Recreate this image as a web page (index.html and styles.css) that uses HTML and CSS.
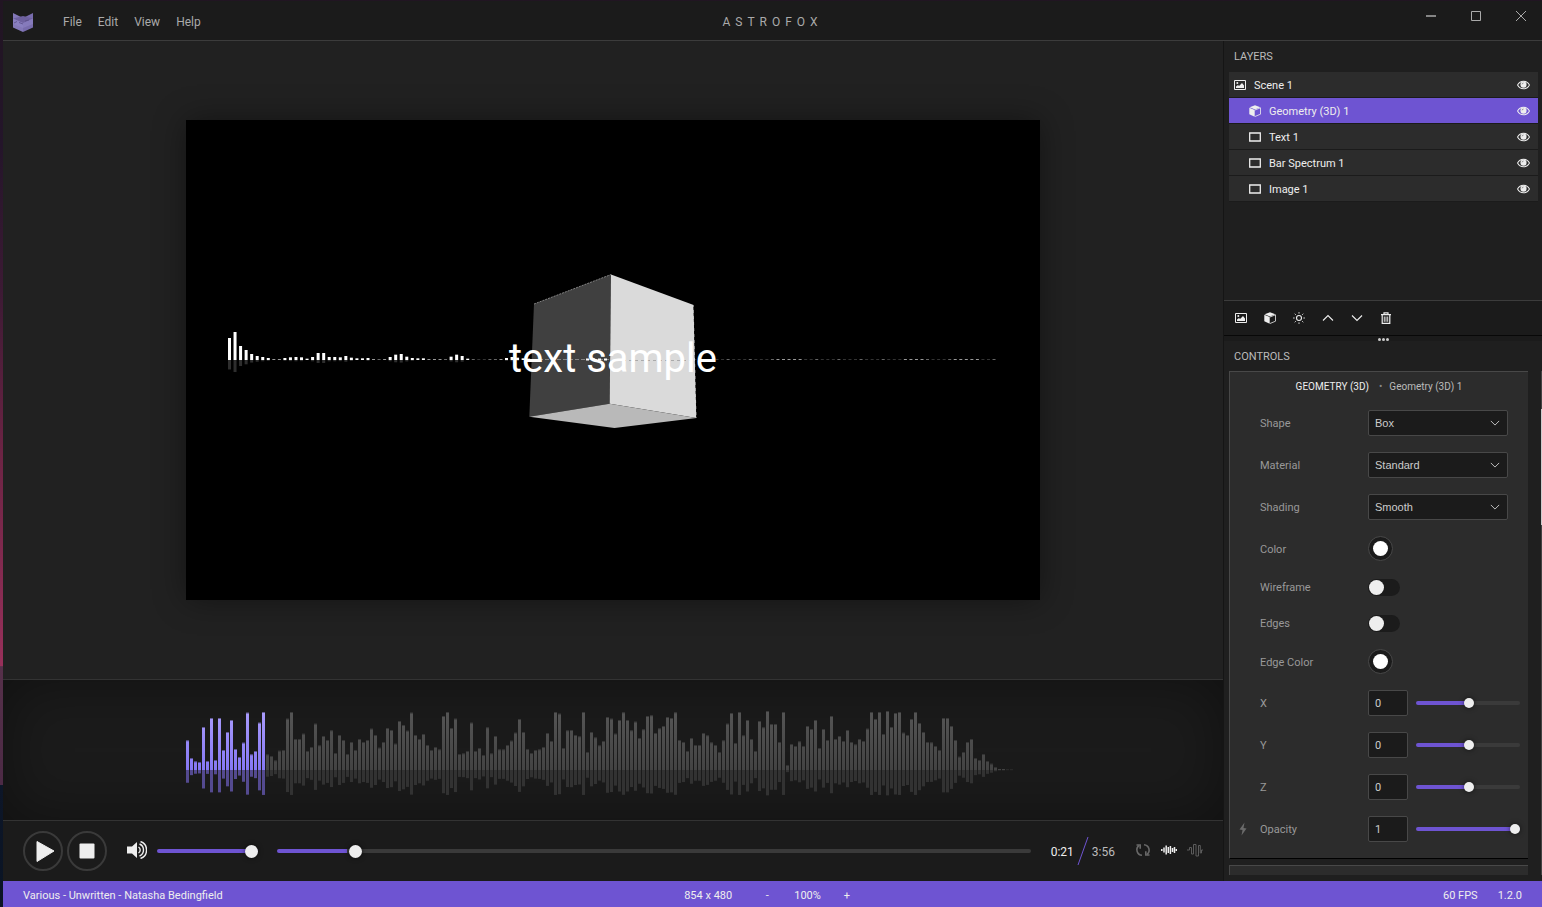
FILE: index.html
```html
<!DOCTYPE html>
<html lang="en">
<head>
<meta charset="utf-8">
<title>Astrofox</title>
<link rel="stylesheet" href="styles.css">
</head>
<body>
<svg class="sprite" aria-hidden="true">
  <symbol id="i-image" viewBox="0 0 12 10"><path d="M.5.5h11v9H.5z" fill="none" stroke="currentColor"/><path d="M2 8V6.500l2-1.500 1 1 3-3 2 2.500V8z" fill="currentColor"/><circle cx="3.300" cy="3" r="1" fill="currentColor"/></symbol>
  <symbol id="i-cube" viewBox="0 0 12 12"><path d="M.3 2.800 5.700 5v6.800L.3 9.300z" fill="currentColor"/><path d="M.6 2.200 6 .2l5.400 2L6 4.400z" fill="currentColor"/><path d="M6 5 11.500 2.800v6.400L6 11.500" fill="none" stroke="currentColor" stroke-width=".8"/></symbol>
  <symbol id="i-rect" viewBox="0 0 12 10"><path d="M.7 1h10.600v8H.7z" fill="none" stroke="currentColor" stroke-width="1.300"/></symbol>
  <symbol id="i-eye" viewBox="0 0 14 10"><path d="M.6 5C2 2.300 4.300.9 7 .9S12 2.300 13.400 5C12 7.700 9.700 9.100 7 9.100S2 7.700.6 5z" fill="none" stroke="currentColor" stroke-width="1.100"/><circle cx="7" cy="4.600" r="3.300" fill="currentColor"/><path d="M5.500 4.300A1.500 1.500 0 0 1 7 2.900" fill="none" stroke="#2c2c2c" stroke-width=".5"/></symbol>
  <symbol id="i-sun" viewBox="0 0 12 12"><circle cx="6" cy="6" r="2.500" fill="none" stroke="currentColor" stroke-width="1.100"/><path d="M6 0v1.700M6 10.300V12M0 6h1.700M10.300 6H12M1.700 1.700l1.200 1.200M9.100 9.100l1.200 1.200M1.700 10.300l1.200-1.200M9.100 2.900l1.200-1.200" stroke="currentColor" stroke-width=".8"/></symbol>
  <symbol id="i-up" viewBox="0 0 12 12"><path d="M1 8.500 6 3.500l5 5" fill="none" stroke="currentColor" stroke-width="1.100"/></symbol>
  <symbol id="i-down" viewBox="0 0 12 12"><path d="M1 3.500l5 5 5-5" fill="none" stroke="currentColor" stroke-width="1.100"/></symbol>
  <symbol id="i-trash" viewBox="0 0 12 12"><path d="M1 2.700h10M4 2.500V.8h4v1.700M2.200 3v8.300h7.600V3" fill="none" stroke="currentColor" stroke-width="1.200"/><path d="M4.300 4.500v5.300M6 4.500v5.300M7.700 4.500v5.300" stroke="currentColor" stroke-width=".9"/></symbol>
</svg>

<div class="app">
  <header class="titlebar">
    <div class="titlebar-left">
      <svg class="logo" viewBox="0 0 20 20" aria-label="Astrofox logo"><path d="M0 1l10 5v14L0 15.500z" fill="#8378b8"/><path d="M20 1l-10 5v14l10-4.500z" fill="#786cad"/><path d="M0 6.500 10 4l10 2.500L10 11z" fill="#6e619f"/><path d="M0 6.500 10 11l10-4.500V12l-10 4L0 12z" fill="#8e83c4" opacity=".6"/><path d="M1 11l3-1.500M6 10.500l4 1.500M12 9l4-1" stroke="#584c85" stroke-width=".8"/></svg>
      <nav class="menu">
        <button type="button">File</button><button type="button">Edit</button><button type="button">View</button><button type="button">Help</button>
      </nav>
    </div>
    <h1 class="app-name">ASTROFOX</h1>
    <div class="window-buttons">
      <button type="button" aria-label="Minimize"><svg viewBox="0 0 10 10"><path d="M0 5h10" stroke="currentColor" stroke-width="1.500"/></svg></button>
      <button type="button" aria-label="Maximize"><svg viewBox="0 0 10 10"><path d="M.5.5h9v9h-9z" fill="none" stroke="currentColor"/></svg></button>
      <button type="button" aria-label="Close"><svg viewBox="0 0 10 10"><path d="M0 0l10 10M10 0 0 10" stroke="currentColor"/></svg></button>
    </div>
  </header>

  <div class="workspace">
    <main class="main">
      <section class="stage">
        <svg class="scene" viewBox="0 0 854 480" role="img" aria-label="Scene preview">
          <g id="spectrum-back"></g>
          <path d="M348 184 425 154.500 423.700 283.700 343.300 296.700z" fill="#404040"/>
          <path d="M425 154.500 507.600 185 510.500 298 423.700 283.700z" fill="#dadada"/>
          <path d="M343.300 296.700 423.700 283.700 510.500 298 428.500 308z" fill="#b9b9b9"/>
          <path d="M348 184 425 154.500" stroke="#aaa" stroke-width=".7" stroke-dasharray="2 1"/>
          <path d="M508 187 510.800 297" stroke="#000" stroke-width="1" stroke-dasharray="3 3"/>
          <path d="M347 239.500h77" stroke="#ccc" stroke-dasharray="4 2" opacity=".5"/>
          <path d="M425 240.500h84" stroke="#aaa" stroke-dasharray="3 3"/>
          <path d="M400 239.500h23" stroke="#fff" stroke-width="2" stroke-dasharray="3 3"/>
          <text class="scene-text" x="427" y="252" text-anchor="middle">text sample</text>
        </svg>
      </section>
      <section class="waveform">
        <svg class="wave" viewBox="0 0 854 140" role="img" aria-label="Waveform">
          <defs>
            <linearGradient id="played" gradientUnits="userSpaceOnUse" x1="0" y1="30" x2="0" y2="90"><stop offset="0" stop-color="#aa9cfc"/><stop offset="1" stop-color="#8577f4"/></linearGradient>
            <linearGradient id="unplayed" gradientUnits="userSpaceOnUse" x1="0" y1="30" x2="0" y2="90"><stop offset="0" stop-color="#555"/><stop offset="1" stop-color="#434343"/></linearGradient>
          </defs>
          <g id="wave-bars"></g>
        </svg>
      </section>
      <section class="player">
        <div class="transport">
          <button type="button" class="round" aria-label="Play"><svg viewBox="0 0 40 40"><path d="M14 10.500 31 20 14 30.500z" fill="#eee" stroke="#eee" stroke-linejoin="round"/></svg></button>
          <button type="button" class="round" aria-label="Stop"><svg viewBox="0 0 40 40"><rect x="12.500" y="12.500" width="15" height="15" rx="1" fill="#eee"/></svg></button>
        </div>
        <button type="button" class="speaker" aria-label="Mute"><svg viewBox="0 0 20 18"><path d="M0 5.500h5L10 1v16l-5-4.500H0z" fill="#eee"/><path d="M11.500 6a3.500 3.500 0 0 1 0 6M12.500 3a6.500 6.500 0 0 1 0 12M13.500.5a9 9 0 0 1 0 17" fill="none" stroke="#eee" stroke-width="1.400"/></svg></button>
        <input class="slider large volume" type="range" aria-label="Volume" min="0" max="100" value="100" style="--fill:100%">
        <input class="slider large seek" type="range" aria-label="Position" min="0" max="1000" value="97" style="--fill:9.3%">
        <div class="time"><span class="now">0:21</span><svg viewBox="0 0 12 30"><path d="M1 29 11 1" stroke="#6e54d2"/></svg><span>3:56</span></div>
        <div class="toggles">
          <button type="button" aria-label="Repeat"><svg viewBox="0 0 16 16" fill="none" stroke="#686868" stroke-width="1.600"><path d="M7 13.300A5.500 5.500 0 0 1 4 3.500M9 2.700a5.500 5.500 0 0 1 3 9.800"/><path d="M1.500 3h3.700v3.700M14.500 13h-3.700V9.300"/></svg></button>
          <button type="button" aria-label="Waveform"><svg viewBox="0 0 16 16" stroke="#eee" stroke-width="1.500"><path d="M.8 7v2M3 5.500v5M5.200 3.500v9M7.300 5v6M9.400 4v8M11.500 6v4M13.500 5v6M15.400 7v2"/></svg></button>
          <button type="button" aria-label="Oscilloscope"><svg viewBox="0 0 16 16" fill="none" stroke="#5c5c5c" stroke-width="1"><path d="M0 8h2.500V5.500h2V12H6.500V2.500H9V14h2.500V3.500h1.800V11h1.200V8H16"/></svg></button>
        </div>
      </section>
    </main>

    <aside class="side">
      <section class="layers">
        <h2>LAYERS</h2>
        <ul class="layer-list">
          <li class="layer root"><svg class="kind"><use href="#i-image"/></svg><span>Scene 1</span><button type="button" aria-label="Toggle Scene 1"><svg><use href="#i-eye"/></svg></button></li>
          <li class="layer active"><svg class="kind cube"><use href="#i-cube"/></svg><span>Geometry (3D) 1</span><button type="button" aria-label="Toggle Geometry (3D) 1"><svg><use href="#i-eye"/></svg></button></li>
          <li class="layer"><svg class="kind"><use href="#i-rect"/></svg><span>Text 1</span><button type="button" aria-label="Toggle Text 1"><svg><use href="#i-eye"/></svg></button></li>
          <li class="layer"><svg class="kind"><use href="#i-rect"/></svg><span>Bar Spectrum 1</span><button type="button" aria-label="Toggle Bar Spectrum 1"><svg><use href="#i-eye"/></svg></button></li>
          <li class="layer"><svg class="kind"><use href="#i-rect"/></svg><span>Image 1</span><button type="button" aria-label="Toggle Image 1"><svg><use href="#i-eye"/></svg></button></li>
        </ul>
        <div class="tools">
          <button type="button" aria-label="Add scene"><svg class="wide"><use href="#i-image"/></svg></button>
          <button type="button" aria-label="Add display"><svg><use href="#i-cube"/></svg></button>
          <button type="button" aria-label="Add effect"><svg><use href="#i-sun"/></svg></button>
          <button type="button" aria-label="Move up"><svg><use href="#i-up"/></svg></button>
          <button type="button" aria-label="Move down"><svg><use href="#i-down"/></svg></button>
          <button type="button" aria-label="Delete"><svg><use href="#i-trash"/></svg></button>
        </div>
      </section>
      <div class="splitter"><i></i><i></i><i></i></div>
      <section class="controls">
        <h2>CONTROLS</h2>
        <div class="scroller">
          <div class="cards">
            <form class="card">
              <h3><b>GEOMETRY (3D)</b><span class="dot">•</span><span>Geometry (3D) 1</span></h3>
              <div class="row"><label for="shape">Shape</label><span class="select"><select id="shape"><option>Box</option></select><svg><use href="#i-down"/></svg></span></div>
              <div class="row"><label for="material">Material</label><span class="select"><select id="material"><option>Standard</option></select><svg><use href="#i-down"/></svg></span></div>
              <div class="row"><label for="shading">Shading</label><span class="select"><select id="shading"><option>Smooth</option></select><svg><use href="#i-down"/></svg></span></div>
              <div class="row"><label for="color">Color</label><input class="swatch" id="color" type="color" value="#ffffff"></div>
              <div class="row short"><label for="wireframe">Wireframe</label><input class="toggle" id="wireframe" type="checkbox" role="switch"></div>
              <div class="row short"><label for="edges">Edges</label><input class="toggle" id="edges" type="checkbox" role="switch"></div>
              <div class="row"><label for="edge-color">Edge Color</label><input class="swatch" id="edge-color" type="color" value="#ffffff"></div>
              <div class="row"><label for="x">X</label><input class="number" id="x" type="text" value="0"><input class="slider" type="range" aria-label="X" value="51" style="--fill:50%"></div>
              <div class="row"><label for="y">Y</label><input class="number" id="y" type="text" value="0"><input class="slider" type="range" aria-label="Y" value="51" style="--fill:50%"></div>
              <div class="row"><label for="z">Z</label><input class="number" id="z" type="text" value="0"><input class="slider" type="range" aria-label="Z" value="51" style="--fill:50%"></div>
              <div class="row"><svg class="bolt" viewBox="0 0 8 14"><path d="M5.500.5.500 7.500l3 .5-1 5.500 5-7-3-.5z" fill="#6a6a6a"/></svg><label for="opacity">Opacity</label><input class="number" id="opacity" type="text" value="1"><input class="slider" type="range" aria-label="Opacity" value="100" style="--fill:100%"></div>
            </form>
            <div class="card next"></div>
          </div>
          <div class="scrollbar"></div>
        </div>
      </section>
    </aside>
  </div>

  <footer class="status">
    <span>Various - Unwritten - Natasha Bedingfield</span>
    <div class="zoom"><span>854 x 480</span><button type="button" class="out" aria-label="Zoom out">-</button><span>100%</span><button type="button" class="in" aria-label="Zoom in">+</button></div>
    <div class="info"><span>60 FPS</span><span>1.2.0</span></div>
  </footer>
</div>
<script src="app.js"></script>
</body>
</html>
```

FILE: styles.css
```css
* { box-sizing: border-box; }

body {
  margin: 0;
  font: 11px/16px Roboto, "Liberation Sans", sans-serif;
  color: #eee;
  background: linear-gradient(#211522 0%, #24152a 16%, #3c1a34 32%, #6c2444 50%, #97305a 73.4%, #56304a 73.5%, #4c2a45 86.5%, #0d1628 86.6%, #0a1424 100%);
}

button {
  margin: 0;
  padding: 0;
  border: 0;
  background: none;
  color: inherit;
  font: inherit;
  display: flex;
  align-items: center;
  justify-content: center;
}

h1, h2, h3, ul { margin: 0; padding: 0; font: inherit; }

.sprite { display: none; }

.app {
  height: 100vh;
  margin-left: 3px;
  padding-top: 1px;
  display: flex;
  flex-direction: column;
}

/* Title bar */
.titlebar {
  flex: none;
  height: 40px;
  display: grid;
  grid-template-columns: 1fr auto 1fr;
  align-items: center;
  background: #1b1b1b;
  border-bottom: 1px solid #3c3c3c;
}
.titlebar-left { display: flex; align-items: center; padding: 2px 0 0 10px; }
.logo { width: 20px; height: 20px; margin-right: 22px; }
.menu { display: flex; font-size: 12px; color: #aaa; }
.menu button { padding: 0 8px; }
.app-name { padding-top: 2px; font-size: 12px; letter-spacing: 5px; color: #aaa; }
.window-buttons { display: flex; align-self: start; justify-content: flex-end; margin-right: -1px; color: #aaa; }
.window-buttons button { width: 45px; height: 30px; }
.window-buttons svg { width: 10px; height: 10px; overflow: visible; }

.workspace { flex: 1; min-height: 0; display: flex; }
.main { flex: 1; min-width: 0; display: flex; flex-direction: column; }

/* Stage */
.stage {
  flex: 1;
  min-height: 0;
  display: flex;
  align-items: center;
  justify-content: center;
  background: #212121;
}
.scene {
  width: 854px;
  max-width: 100%;
  max-height: 100%;
  background: #000;
  box-shadow: 0 0 30px rgba(0, 0, 0, .4);
}
.scene-text { font: 40px Roboto, sans-serif; fill: #fff; }

.waveform {
  flex: none;
  display: flex;
  justify-content: center;
  background: #1b1b1b;
  border-top: 1px solid #333;
  box-shadow: inset 0 0 60px rgba(0, 0, 0, .4);
}
.wave { width: 854px; max-width: 100%; }

/* Sliders */
.slider {
  --thumb: 10px;
  --track: #3a3a3a;
  appearance: none;
  height: 16px;
  margin: 0;
  background: none;
}
.slider.large { --thumb: 13px; }
.slider::-webkit-slider-runnable-track {
  height: 4px;
  border-radius: 2px;
  background: linear-gradient(to right, #6e54d2 var(--fill), var(--track) var(--fill));
}
.slider::-webkit-slider-thumb {
  appearance: none;
  width: var(--thumb);
  height: var(--thumb);
  margin-top: calc((4px - var(--thumb)) / 2);
  border-radius: 50%;
  background: #eee;
  box-shadow: 0 0 5px rgba(0, 0, 0, .6);
}

/* Player */
.player {
  flex: none;
  height: 61px;
  display: flex;
  align-items: center;
  padding: 0 20px;
  background: #1b1b1b;
  border-top: 1px solid #333;
}
.transport { display: flex; gap: 4px; }
.round { width: 40px; height: 40px; border: 2px solid #3a3a3a; border-radius: 50%; }
.round svg { flex: none; width: 40px; height: 40px; }
.speaker { margin: 0 10px 0 20px; padding-bottom: 2px; }
.speaker svg { width: 20px; height: 18px; }
.volume { width: 101px; }
.seek { flex: 1; min-width: 0; margin-left: 19px; }
.time { display: flex; align-items: center; gap: 3px; margin: 0 20px; font-size: 12px; color: #bbb; }
.time span { padding-top: 2px; }
.time .now { color: #eee; }
.time svg { width: 12px; height: 30px; }
.toggles { display: flex; gap: 10px; padding-bottom: 2px; }
.toggles svg { width: 16px; height: 16px; }

/* Side panels */
.side {
  flex: none;
  width: 319px;
  display: flex;
  flex-direction: column;
  background: #1f1f1f;
  border-left: 1px solid #151515;
}
.side h2 { padding: 8px 10px 7px; color: #bbb; }
.side .controls h2 { padding-bottom: 6px; }
.layers { flex: none; height: 295px; display: flex; flex-direction: column; border-bottom: 1px solid #080808; }
.layer-list { flex: 1; padding: 0 4px 0 5px; list-style: none; }
.layer {
  display: flex;
  align-items: center;
  height: 26px;
  padding: 0 8px 0 20px;
  background: #2c2c2c;
  border-bottom: 1px solid #1b1b1b;
}
.layer.root { padding-left: 5px; }
.layer.active { background: #6e54d2; }
.layer span { flex: 1; padding-top: 2px; }
.kind { width: 12px; height: 10px; margin-right: 8px; }
.kind.cube { height: 12px; }
.layer button svg { width: 13px; height: 10px; }
.tools {
  height: 35px;
  display: flex;
  gap: 17px;
  padding-left: 11px;
  background: #1b1b1b;
  border-top: 1px solid #3c3c3c;
}
.tools svg { width: 12px; height: 12px; }
.tools .wide { height: 10px; }
.splitter { flex: none; height: 5px; display: flex; align-items: flex-end; justify-content: center; gap: 1px; background: #1b1b1b; }
.splitter i { width: 3px; height: 3px; border-radius: 50%; background: #ccc; }

.controls { flex: 1; min-height: 0; display: flex; flex-direction: column; }
.scroller { flex: 1; min-height: 0; display: flex; justify-content: space-between; margin-bottom: 6px; }
.cards { flex: 1; overflow: hidden; padding-left: 5px; }
.scrollbar {
  width: 1px;
  margin-left: 13px;
  background: linear-gradient(#444 7.5%, #ccc 7.5% 30.5%, #444 30.5%);
}
.card {
  padding-bottom: 8px;
  background: #2c2c2c;
  border: 1px solid #484848;
  border-width: 1px 0 1px 1px;
  border-bottom-color: #000;
}
.card.next { margin-top: 6px; height: 40px; }
.card h3 { display: flex; justify-content: center; padding: 7px 0; font-size: 10px; color: #bbb; }
.card h3 b { font-weight: 400; color: #eee; }
.card .dot { margin: 0 7px 0 10px; color: #888; }
.row {
  position: relative;
  display: flex;
  align-items: center;
  padding: 8px 8px 8px 30px;
}
.row.short { height: 36px; }
.row label { flex: none; width: 108px; padding-top: 2px; color: #999; }
.bolt { position: absolute; left: 9px; width: 8px; height: 14px; }
.select { position: relative; display: flex; align-items: center; }
.select svg { position: absolute; right: 8px; width: 10px; height: 10px; color: #ccc; pointer-events: none; }
.select select, .number {
  height: 26px;
  padding: 0 6px;
  border: 1px solid #484848;
  border-radius: 2px;
  background: #1b1b1b;
  color: #ccc;
  font: 11px "Liberation Sans", sans-serif;
}
.select select { appearance: none; width: 140px; }
.number { width: 40px; font-family: Roboto, sans-serif; }
.row .slider { flex: 1; min-width: 0; margin-left: 8px; }
.swatch {
  appearance: none;
  width: 25px;
  height: 25px;
  padding: 4px;
  border: 1px solid #484848;
  border-radius: 50%;
  background: #1b1b1b;
}
.swatch::-webkit-color-swatch-wrapper { padding: 0; }
.swatch::-webkit-color-swatch { border: 0; border-radius: 50%; }
.toggle {
  appearance: none;
  width: 32px;
  height: 17px;
  margin: 0;
  padding: 1px;
  border-radius: 9px;
  background: #1b1b1b;
}
.toggle::before { content: ""; display: block; width: 15px; height: 15px; border-radius: 50%; background: #eee; }
.toggle:checked::before { margin-left: auto; }

/* Status bar */
.status {
  flex: none;
  height: 26px;
  display: grid;
  grid-template-columns: 1fr auto 1fr;
  align-items: center;
  padding: 4px 20px 0;
  background: #6e54d2;
}
.zoom { display: flex; align-items: center; }
.zoom button { height: 20px; }
.zoom .out { width: 62px; padding-left: 8px; }
.zoom .in { width: 40px; padding-left: 12px; }
.info { display: flex; justify-content: flex-end; gap: 20px; }
```

FILE: app.js
```js
const NS = "http://www.w3.org/2000/svg";

function rect(parent, x, y, w, h, fill, opacity) {
  const r = document.createElementNS(NS, "rect");
  const attrs = { x, y, width: w, height: h, fill, opacity };
  for (const k in attrs) r.setAttribute(k, attrs[k]);
  parent.appendChild(r);
}

/* Bar heights, in thirds of a unit. */
const wave = [
  89,36,26,24,129,27,156,30,156,60,114,150,63,39,82,172,47,57,142,174,
  47,42,29,58,60,154,174,93,93,109,57,69,139,74,102,90,119,51,105,90,48,84,60,93,84,90,124,105,67,84,126,120,79,147,135,118,172,105,93,108,75,60,69,62,162,174,
  126,154,48,50,57,142,57,66,45,128,50,102,62,62,75,88,112,153,114,63,51,60,62,69,111,87,174,169,66,119,120,105,101,174,54,114,98,74,87,159,154,109,150,173,150,119,145,96,122,162,164,111,125,132,159,156,173,90,84,57,96,75,75,111,104,83,75,54,89,139,
  171,81,174,104,150,93,57,147,128,177,138,138,84,174,15,78,72,86,72,132,123,150,66,123,90,162,93,102,87,120,84,77,93,87,124,174,153,174,108,177,129,171,174,112,105,153,174,141,114,84,83,72,60,156,156,132,90,40,54,84,93,36,30,48,27,19,9,3,3,1,1
];
const played = 20;
const waveGroup = document.getElementById("wave-bars");
wave.forEach((v, i) => {
  const h = v / 3, x = i * 4, on = i < played;
  rect(waveGroup, x, 90 - h, 3, h, on ? "url(#played)" : "url(#unplayed)", 1);
  if (h > 2) rect(waveGroup, x, 90 - h, 3, 1, "#1b1b1b", 0.45);
  rect(waveGroup, x, 90, 3, h * 0.43, on ? "#544a90" : "#323232", 1);
});

const spectrum = [66,84,42,30,18,12,9,6,3,3,6,8,9,8,4,9,21,21,9,9,8,12,7,5,5,6,3,2,3,9,16,18,10,6,5,5,3,3,3,2,10,16,12,4,2,1,1,2,2,3,6,9,7,5,4];
while (spectrum.length < 139) {
  const i = spectrum.length;
  const peak = (i > 98 && i < 104) || (i > 121 && i < 126) || (i > 130 && i < 136);
  spectrum.push(peak ? 3 : [1, 1, 2, 1][i % 4]);
}
const specGroup = document.getElementById("spectrum-back");
spectrum.forEach((v, i) => {
  const h = Math.max(1, v / 3), x = 42 + i * 5.54;
  rect(specGroup, x, 240 - h, 3, h, "#fff", v < 4 ? v * 0.2 : 1);
  if (v > 5) rect(specGroup, x, 240, 3, h * 0.43, "#fff", 0.18);
});
```
